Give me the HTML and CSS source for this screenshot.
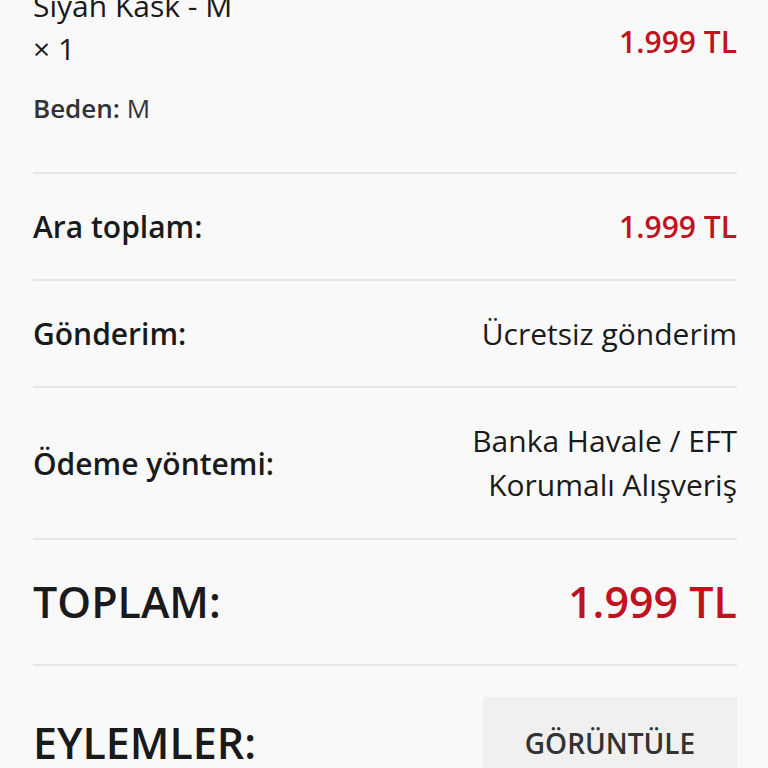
FILE: index.html
```html
<!DOCTYPE html>
<html lang="tr">
<head>
  <meta charset="UTF-8">
  <title>Sipariş detayları</title>
  <link rel="stylesheet" href="styles.css">
</head>
<body>

<div class="order">
  <div class="row item">
    <div class="product">
      <div class="product-name">LS2 Rapid<br>Siyah Kask - M</div>
      <div class="qty">&times; 1</div>
      <div class="meta"><strong>Beden:</strong> M</div>
    </div>
    <div class="price">1.999 TL</div>
  </div>

  <div class="row">
    <div class="label">Ara toplam:</div>
    <div class="price">1.999 TL</div>
  </div>

  <div class="row">
    <div class="label">Gönderim:</div>
    <div class="value">Ücretsiz gönderim</div>
  </div>

  <div class="row">
    <div class="label">Ödeme yöntemi:</div>
    <div class="value multi">Banka Havale / EFT<br>Korumalı Alışveriş</div>
  </div>

  <div class="row total">
    <div class="label">TOPLAM:</div>
    <div class="price">1.999 TL</div>
  </div>

  <div class="row actions">
    <div class="label">EYLEMLER:</div>
    <button class="view-btn">Görüntüle</button>
  </div>
</div>

</body>
</html>
```

FILE: styles.css
```css
body {
  margin: 0;
  background: #f9f9f9;
  font-family: 'Open Sans', 'Noto Sans', sans-serif;
  font-size: 30px;
  line-height: 43px;
  color: #1a1a1a;
}
.order {
  margin-top: -90px; /* page is scrolled */
  padding: 0 31px 0 33px;
}
.row {
  display: flex;
  justify-content: space-between;
  align-items: center;
  padding: 31px 0;
  border-bottom: 2px solid #e6e6e6;
}
.label {
  font-weight: 600;
}
.value {
  text-align: right;
}
.value.multi {
  line-height: 44px;
}
.price {
  color: #c1121f;
  font-weight: 600;
  text-align: right;
}
.meta {
  font-size: 26px;
  line-height: 37px;
  margin: 20px 0 14px;
  color: #333;
}
.meta strong {
  font-weight: 600;
}
.total {
  font-size: 43px;
  line-height: 62px;
}
.actions {
  border-bottom: none;
  font-size: 43px;
  line-height: 62px;
}
.view-btn {
  width: 254px;
  height: 92px;
  border: none;
  background: #f0f0f0;
  color: #333;
  font-family: inherit;
  font-size: 28px;
  font-weight: 600;
  text-transform: uppercase;
  cursor: pointer;
}
```
